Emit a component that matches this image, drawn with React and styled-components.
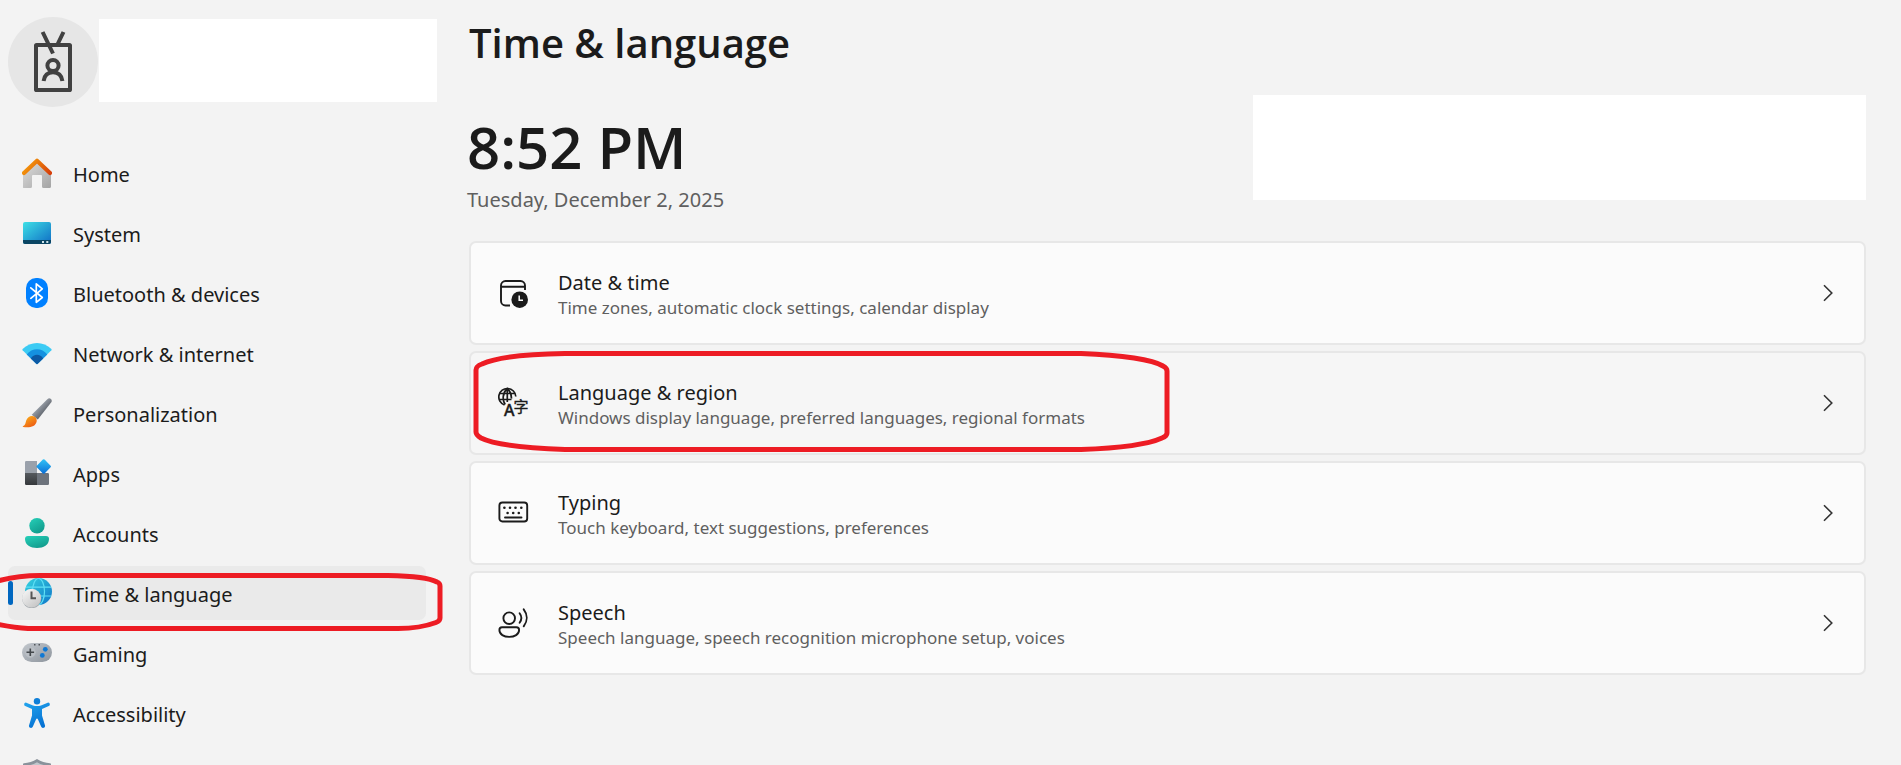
import styled, { createGlobalStyle } from 'styled-components';

const GlobalStyle = createGlobalStyle`
    * {
        box-sizing: border-box;
    }

    body {
        margin: 0;
        background: #f3f3f3;
        color: #1b1b1b;
        font-family: 'Noto Sans', 'Open Sans', sans-serif;
    }
`;

const HomeIcon = () => (
    <svg width="30" height="30" viewBox="0 0 30 30" aria-hidden="true">
        <defs>
            <linearGradient id="homeWall" x1="0" y1="0" x2="1" y2="1">
                <stop offset="0" stopColor="#dedede" />
                <stop offset="1" stopColor="#a3a3a3" />
            </linearGradient>
            <linearGradient id="homeRoof" gradientUnits="userSpaceOnUse" x1="6" y1="2" x2="27" y2="17">
                <stop offset="0" stopColor="#f59b0b" />
                <stop offset="1" stopColor="#d63f0b" />
            </linearGradient>
        </defs>
        <path d="M1 14 15 3l14 11v14.5a1.5 1.5 0 0 1-1.5 1.5h-6a1.5 1.5 0 0 1-1.5-1.5V18a1 1 0 0 0-1-1h-8a1 1 0 0 0-1 1v10.5a1.5 1.5 0 0 1-1.5 1.5h-5A1.5 1.5 0 0 1 1 28.5z" fill="url(#homeWall)" />
        <path d="M2 15 15 2.800 28 15" fill="none" stroke="url(#homeRoof)" strokeWidth="4.2" strokeLinecap="round" strokeLinejoin="round" />
    </svg>
);

const SystemIcon = () => (
    <svg width="30" height="30" viewBox="0 0 30 30" aria-hidden="true">
        <defs>
            <linearGradient id="screen" x1="0" y1="0" x2="1" y2="1">
                <stop offset="0" stopColor="#3ee0e6" />
                <stop offset="1" stopColor="#0f6cc4" />
            </linearGradient>
        </defs>
        <rect x="1" y="4" width="28" height="22" rx="2" fill="url(#screen)" />
        <path d="M1 22h28v2a2 2 0 0 1-2 2H3a2 2 0 0 1-2-2z" fill="#0a4563" />
        <path d="M20 23h2v2h-2zM24.3 23h2v2h-2z" fill="#cfe3ea" />
    </svg>
);

const BluetoothIcon = () => (
    <svg width="30" height="30" viewBox="0 0 30 30" aria-hidden="true">
        <rect x="4" y="0" width="22" height="30" rx="10" fill="#0080ff" />
        <path d="M8.8 9.8 20.3 19.5l-6 4.8V5.8l6 5L8.8 20.3" fill="none" stroke="#fff" strokeWidth="1.7" strokeLinejoin="round" strokeLinecap="round" />
    </svg>
);

const NetworkIcon = () => (
    <svg width="30" height="30" viewBox="0 0 30 30" aria-hidden="true">
        <path d="M.6 12.300a1 1 0 0 1 0-1.300C8.500 3 21.500 3 29.400 11a1 1 0 0 1 0 1.300L15.700 25.800a1 1 0 0 1-1.400 0z" fill="#3ccbf4" />
        <path d="M4.700 16.400C10 9.400 20 9.400 25.300 16.400l-9.600 9.400a1 1 0 0 1-1.400 0z" fill="#1591e0" />
        <path d="M8.800 20.400c3-5 9.400-5 12.400 0l-5.500 5.400a1 1 0 0 1-1.400 0z" fill="#0c59a4" />
    </svg>
);

const BrushIcon = () => (
    <svg width="30" height="30" viewBox="0 0 30 30" aria-hidden="true">
        <defs>
            <linearGradient id="handle" x1="0.2" y1="0.2" x2="0.7" y2="0.7">
                <stop offset="0" stopColor="#b9c0c9" />
                <stop offset="1" stopColor="#595e66" />
            </linearGradient>
            <linearGradient id="bristle" x1="0" y1="0" x2="0.7" y2="1">
                <stop offset="0" stopColor="#fcb81c" />
                <stop offset="1" stopColor="#ec5a13" />
            </linearGradient>
        </defs>
        <path d="M25.600.9c2-1.600 5 .4 3.900 3L15.800 21.500 9.700 16.800z" fill="url(#handle)" />
        <path d="M1 28.200c2.400-.7 2.500-3.200 3.200-5.700 1.200-4 5.400-5.800 8.600-3.800 3.300 2.400 2.200 7.300-1.500 9.300-3 1.700-7.500 1.500-10.100.9-.7-.1-.7-.6-.2-.7z" fill="url(#bristle)" />
    </svg>
);

const AppsIcon = () => (
    <svg width="30" height="30" viewBox="0 0 30 30" aria-hidden="true">
        <defs>
            <linearGradient id="diamond" x1="0" y1="0" x2="1" y2="1">
                <stop offset="0" stopColor="#32c5f7" />
                <stop offset="1" stopColor="#0a6cd6" />
            </linearGradient>
            <linearGradient id="tileDark" x1="0" y1="0" x2="0" y2="1">
                <stop offset="0" stopColor="#55595e" />
                <stop offset="1" stopColor="#35383b" />
            </linearGradient>
        </defs>
        <path d="M3 4.200A1.200 1.200 0 0 1 4.200 3H15v12H3z" fill="#9aa1ab" />
        <path d="M3 15h12v12H4.200A1.200 1.200 0 0 1 3 25.800z" fill="url(#tileDark)" />
        <path d="M15 15h10.800a1.200 1.200 0 0 1 1.200 1.200v9.600a1.200 1.200 0 0 1-1.200 1.200H15z" fill="#6d737c" />
        <rect x="16.2" y="3" width="11" height="11" rx="1.2" transform="rotate(45 21.7 8.5)" fill="url(#diamond)" />
    </svg>
);

const AccountsIcon = () => (
    <svg width="30" height="30" viewBox="0 0 30 30" aria-hidden="true">
        <defs>
            <linearGradient id="person" x1="0" y1="0" x2="0.6" y2="1">
                <stop offset="0" stopColor="#26d0b9" />
                <stop offset="1" stopColor="#129c8d" />
            </linearGradient>
        </defs>
        <circle cx="15" cy="7.7" r="7.7" fill="url(#person)" />
        <path d="M6 18h18a3 3 0 0 1 3 3c0 6-5.500 9-12 9S3 27 3 21a3 3 0 0 1 3-3z" fill="url(#person)" />
    </svg>
);

const TimeIcon = () => (
    <svg width="30" height="30" viewBox="0 0 30 30" aria-hidden="true">
        <defs>
            <linearGradient id="globe" x1="0" y1="0" x2="1" y2="1">
                <stop offset="0" stopColor="#35d5e0" />
                <stop offset="1" stopColor="#0f74c8" />
            </linearGradient>
            <linearGradient id="dial" x1="0" y1="0" x2="0.8" y2="1">
                <stop offset="0" stopColor="#fafafa" />
                <stop offset="1" stopColor="#c4c4c4" />
            </linearGradient>
        </defs>
        <circle cx="16.5" cy="13.5" r="13.5" fill="url(#globe)" />
        <g fill="none" stroke="#5fe0f5" strokeWidth="1.2">
            <ellipse cx="16.5" cy="13.5" rx="6" ry="13.2" />
            <path d="M4 9.200h25.200M4 18h25.200" />
        </g>
        <circle cx="9.7" cy="20.6" r="9.6" fill="#a5abb0" />
        <circle cx="9.5" cy="20.2" r="9.4" fill="url(#dial)" />
        <path d="M9.500 13.500v6.800h4.500" fill="none" stroke="#555" strokeWidth="2" />
    </svg>
);

const GamingIcon = () => (
    <svg width="30" height="30" viewBox="0 0 30 30" aria-hidden="true">
        <defs>
            <linearGradient id="pad" x1="0" y1="0" x2="1" y2="1">
                <stop offset="0" stopColor="#c3c8ce" />
                <stop offset="1" stopColor="#8d949c" />
            </linearGradient>
        </defs>
        <rect x="0" y="5" width="30" height="19" rx="9.5" fill="url(#pad)" />
        <circle cx="8.3" cy="14.3" r="5.4" fill="#b9bec4" />
        <path d="M8.300 10.500v7.600M4.500 14.300h7.600" stroke="#44484c" strokeWidth="1.6" />
        <circle cx="23.3" cy="11.3" r="2.4" fill="#0f78d4" />
        <circle cx="20.3" cy="17.4" r="2.4" fill="#0f78d4" />
        <path d="M12 6h1.500v1.500H12zM16.500 6H18v1.500h-1.500z" fill="#50555a" />
    </svg>
);

const AccessibilityIcon = () => (
    <svg width="30" height="30" viewBox="0 0 30 30" aria-hidden="true">
        <defs>
            <linearGradient id="figure" x1="0" y1="0" x2="0.5" y2="1">
                <stop offset="0" stopColor="#22a5ee" />
                <stop offset="1" stopColor="#0672d3" />
            </linearGradient>
        </defs>
        <circle cx="15" cy="3.2" r="3.2" fill="#0f7fd8" />
        <path d="M4.300 4.700c-1.900-.6-3.100 2.500-1.100 3.400L10 11v6.500L7 27.400c-.6 2.400 3 3.600 3.900 1.200L14.200 21c.3-.8 1.300-.8 1.600 0l3.300 7.600c.9 2.400 4.500 1.200 3.900-1.200L20 17.500V11l6.800-2.900c2-.9.8-4-1.100-3.400L19 7.400c-2.500.7-5.500.7-8 0z" fill="url(#figure)" />
    </svg>
);

const ShieldIcon = () => (
    <svg width="30" height="30" viewBox="0 0 30 30" aria-hidden="true">
        <path d="M15 1c4 2.600 8.600 4 13 4.200a1 1 0 0 1 1 1V14c0 7.500-5.500 12.800-14 16C6.500 26.800 1 21.500 1 14V6.200a1 1 0 0 1 1-1C6.400 5 11 3.600 15 1z" fill="#8a929b" />
        <path d="M15 4.200c3.500 2.100 7 3.200 11 3.500V14c0 6-4.500 10-11 12.800C8.500 24 4 20 4 14V7.700c4-.3 7.500-1.400 11-3.500z" fill="#c2c7cd" />
    </svg>
);

const BadgeIcon = () => (
    <svg width="90" height="90" viewBox="0 0 90 90" aria-hidden="true">
        <g fill="none" stroke="#414141" strokeWidth="4">
            <rect x="28" y="28" width="34" height="45" rx="0.6" strokeLinejoin="round" />
            <path d="M34.600 15 45 36.500M55.500 15l-5.800 12" />
            <circle cx="45" cy="48.5" r="5.6" />
            <path d="M35.600 64c.8-5.800 4.400-8.800 9.400-8.800s8.600 3 9.400 8.800" />
        </g>
    </svg>
);

const CalendarClockIcon = () => (
    <svg width="32" height="32" viewBox="0 0 32 32" aria-hidden="true">
        <path d="M12 28.500H7.500A4.500 4.500 0 0 1 3 24V8.500A4.500 4.500 0 0 1 7.500 4h15A4.500 4.500 0 0 1 27 8.500V13M3 9.800h24" fill="none" stroke="#1b1b1b" strokeWidth="1.9" />
        <circle cx="21.7" cy="22.7" r="8.3" fill="#1b1b1b" />
        <path d="M21.200 18.500v4.800h3.800" fill="none" stroke="#fff" strokeWidth="1.5" />
    </svg>
);

const LanguageIcon = () => (
    <svg width="32" height="32" viewBox="0 0 32 32" aria-hidden="true">
        <g fill="none" stroke="#1b1b1b" strokeWidth="1.7">
            <path d="M6.500 18A8.500 8.500 0 1 1 17.800 9.500" />
            <path d="M7.200 17.500C4 13 4.600 5.500 9.300 1.500c2.900 2.500 4.200 5.500 4.200 10M9.300 1.500V15M1.500 6.500h15.600M1.500 12.500h12" />
        </g>
        <text x="6" y="29" fontFamily="'Noto Sans', sans-serif" fontWeight="500" fontSize="16" fill="#1b1b1b" stroke="#1b1b1b" strokeWidth="0.4">A</text>
        <text x="15.500" y="25" fontFamily="'Noto Sans CJK SC', sans-serif" fontWeight="400" fontSize="15" fill="#1b1b1b" stroke="#1b1b1b" strokeWidth="0.4">字</text>
    </svg>
);

const KeyboardIcon = () => (
    <svg width="32" height="32" viewBox="0 0 32 32" aria-hidden="true">
        <rect x="1.4" y="5.5" width="27.8" height="19" rx="3" fill="none" stroke="#1b1b1b" strokeWidth="1.9" />
        <g fill="#1b1b1b">
            <circle cx="6.4" cy="10.7" r="1.3" />
            <circle cx="12" cy="10.7" r="1.3" />
            <circle cx="17.5" cy="10.7" r="1.3" />
            <circle cx="23.3" cy="10.7" r="1.3" />
            <circle cx="9.6" cy="16" r="1.3" />
            <circle cx="15.2" cy="16" r="1.3" />
            <circle cx="20.8" cy="16" r="1.3" />
        </g>
        <path d="M7 20.500h16.500" stroke="#1b1b1b" strokeWidth="1.9" strokeLinecap="round" />
    </svg>
);

const SpeechIcon = () => (
    <svg width="32" height="32" viewBox="0 0 32 32" aria-hidden="true">
        <g fill="none" stroke="#1b1b1b" strokeWidth="1.9" strokeLinecap="round">
            <circle cx="11.2" cy="11.2" r="5.8" />
            <path d="M4 20.300h14.400a2.700 2.700 0 0 1 2.700 2.700c0 4.500-4.600 6.900-9.900 6.900S1.400 27.500 1.400 23A2.700 2.700 0 0 1 4 20.300z" />
            <path d="M21.600 6.300c2.200 2.900 2.200 6.500 0 9.400M25.700 2.300c4 5.200 4 11.800 0 17" />
        </g>
    </svg>
);

const ChevronIcon = () => (
    <svg width="10" height="18" viewBox="0 0 10 18" aria-hidden="true">
        <path d="M1 1.200 8.800 9 1 16.800" fill="none" stroke="#333" strokeWidth="1.6" />
    </svg>
);

const navItems = [
    { name: 'Home', icon: HomeIcon },
    { name: 'System', icon: SystemIcon },
    { name: 'Bluetooth & devices', icon: BluetoothIcon },
    { name: 'Network & internet', icon: NetworkIcon },
    { name: 'Personalization', icon: BrushIcon },
    { name: 'Apps', icon: AppsIcon },
    { name: 'Accounts', icon: AccountsIcon },
    { name: 'Time & language', icon: TimeIcon, active: true },
    { name: 'Gaming', icon: GamingIcon },
    { name: 'Accessibility', icon: AccessibilityIcon },
    { name: 'Privacy & security', icon: ShieldIcon, iconOnly: true },
];

const settings = [
    { title: 'Date & time', text: 'Time zones, automatic clock settings, calendar display', icon: CalendarClockIcon },
    { title: 'Language & region', text: 'Windows display language, preferred languages, regional formats', icon: LanguageIcon, marked: true },
    { title: 'Typing', text: 'Touch keyboard, text suggestions, preferences', icon: KeyboardIcon },
    { title: 'Speech', text: 'Speech language, speech recognition microphone setup, voices', icon: SpeechIcon },
];

const NavMark = () => (
    <Mark $left="-8px" $top="6px" width="452" height="60" viewBox="0 0 452 60" aria-hidden="true">
        <path d="M-4 9.500C8 6 24 3.500 40 3.500H388C412 4 430 6 437 10q3 1 3 4V46q0 3-4 4.500C424 55 412 56.500 398 56.500H28C18 56 8 54.500-4 52" />
    </Mark>
);

const CardMark = () => (
    <Mark $left="2px" $top="-4px" width="700" height="106" viewBox="0 0 700 106" aria-hidden="true">
        <path d="M92 4.500H608C650 6 680 11 690 17q4 2 4 5V84q0 3-5 5C676 95 650 99 608 100.500H92C50 99 20 95 8 89q-5-3-5-6V21q0-4 6-6C24 8 52 5 92 4.500Z" />
    </Mark>
);

const App = () => {
    return (
        <Page>
            <GlobalStyle />
            <Sidebar>
                <Profile>
                    <Avatar>
                        <BadgeIcon />
                    </Avatar>
                    <ProfileInfo />
                </Profile>
                <Nav>
                    {navItems.map(({ name, icon: Icon, active, iconOnly }) => (
                        <NavItem key={name} href="#" $active={active} aria-label={name}>
                            <Icon />
                            {!iconOnly && <NavLabel>{name}</NavLabel>}
                            {active && <NavMark />}
                        </NavItem>
                    ))}
                </Nav>
            </Sidebar>

            <Main>
                <Title>Time &amp; language</Title>
                <Overview>
                    <Now>
                        <Clock>8:52 PM</Clock>
                        <Today>Tuesday, December 2, 2025</Today>
                    </Now>
                    <RegionInfo />
                </Overview>
                <CardList>
                    {settings.map(({ title, text, icon: Icon, marked }) => (
                        <Card key={title} href="#" $hovered={marked}>
                            <Icon />
                            <CardText>
                                <CardTitle>{title}</CardTitle>
                                <CardInfo>{text}</CardInfo>
                            </CardText>
                            <ChevronIcon />
                            {marked && <CardMark />}
                        </Card>
                    ))}
                </CardList>
            </Main>
        </Page>
    );
};

export default App;

const Page = styled.div`
    display: flex;
    height: 100vh;
    overflow: hidden;
`;

const Sidebar = styled.aside`
    flex: none;
    width: 448px;
    padding: 17px 11px 0 8px;
`;

const Profile = styled.div`
    display: flex;
    gap: 1px;
`;

const Avatar = styled.div`
    flex: none;
    width: 90px;
    height: 90px;
    border-radius: 50%;
    background: #e6e6e6;
`;

const ProfileInfo = styled.div`
    flex: 1;
    height: 83px;
    margin-top: 2px;
    background: #fff;
`;

const Nav = styled.nav`
    display: flex;
    flex-direction: column;
    gap: 6px;
    margin: 39px 11px 0 0;
`;

const NavItem = styled.a`
    position: relative;
    display: flex;
    align-items: center;
    flex: none;
    gap: 21px;
    height: 54px;
    padding-left: 14px;
    border-radius: 7px;
    background: ${(props) => (props.$active ? '#eaeaea' : 'transparent')};
    color: #1b1b1b;
    text-decoration: none;

    &::before {
        content: '';
        display: ${(props) => (props.$active ? 'block' : 'none')};
        position: absolute;
        left: 0;
        top: 15px;
        width: 5px;
        height: 24px;
        border-radius: 3px;
        background: #0067c0;
    }
`;

const NavLabel = styled.span`
    padding-top: 4px;
    font-size: 20px;
    line-height: 26px;
`;

const Mark = styled.svg`
    position: absolute;
    left: ${(props) => props.$left};
    top: ${(props) => props.$top};
    fill: none;
    stroke: #ed1c24;
    stroke-width: 5px;
    pointer-events: none;
`;

const Main = styled.main`
    flex: 1;
    min-width: 0;
    padding: 15px 35px 0 21px;
`;

const Title = styled.h1`
    margin: 0;
    font-family: 'Open Sans', sans-serif;
    font-size: 40px;
    font-weight: 600;
    line-height: 56px;
`;

const Overview = styled.section`
    display: flex;
    justify-content: space-between;
    margin-top: 24px;
    height: 146px;
`;

const Now = styled.div`
    margin-left: -2px;
`;

const Clock = styled.div`
    margin-top: 12px;
    font-family: 'Open Sans', sans-serif;
    font-size: 58px;
    font-weight: 600;
    line-height: 80px;
`;

const Today = styled.div`
    color: #5f5f5f;
    font-size: 20px;
    line-height: 26px;
`;

const RegionInfo = styled.div`
    flex: 0 1 613px;
    height: 105px;
    background: #fff;
`;

const CardList = styled.div`
    display: flex;
    flex-direction: column;
    gap: 6px;
`;

const Card = styled.a`
    position: relative;
    display: flex;
    align-items: center;
    gap: 28px;
    height: 104px;
    padding: 0 31px 0 27px;
    border: 2px solid #e7e7e7;
    border-radius: 7px;
    background: ${(props) => (props.$hovered ? '#f6f6f6' : '#fbfbfb')};
    color: #1b1b1b;
    text-decoration: none;
`;

const CardText = styled.div`
    flex: 1;
    padding-top: 3px;
`;

const CardTitle = styled.div`
    font-size: 20px;
    line-height: 26px;
`;

const CardInfo = styled.div`
    color: #5f5f5f;
    font-size: 17px;
    line-height: 24px;
`;
